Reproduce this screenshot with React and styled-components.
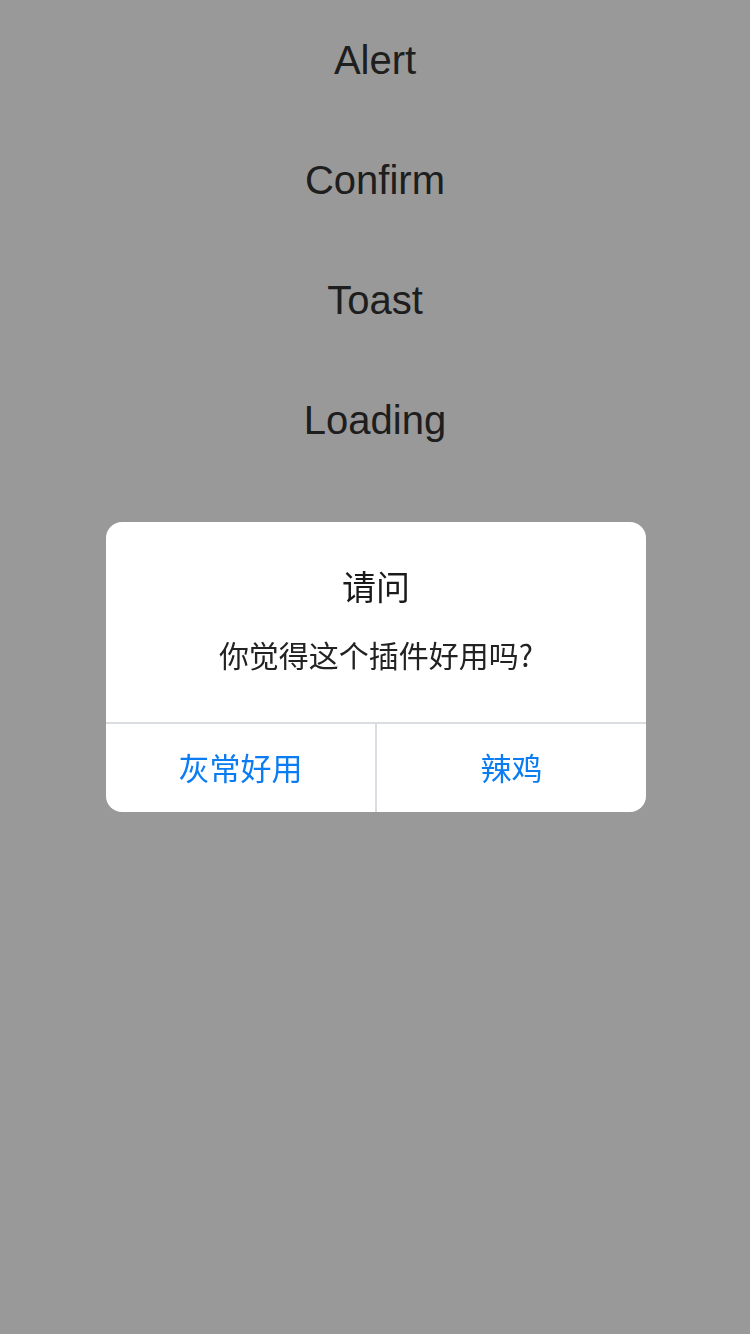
import React from "react";
import styled, { createGlobalStyle } from "styled-components";

const GlobalStyle = createGlobalStyle`
  html, body {
    margin: 0;
    padding: 0;
    background: #ffffff;
    font-family: "Liberation Sans", "Noto Sans CJK SC", Arial, sans-serif;
  }
  * { box-sizing: border-box; }
`;

const Page = styled.div`
  width: 750px;
  min-height: 1334px;
`;

const Menu = styled.ul`
  list-style: none;
  margin: 0;
  padding: 0;
`;

const MenuItem = styled.li`
  height: 120px;
  line-height: 120px;
  text-align: center;
  font-size: 40px;
  color: #333333;
`;

const Mask = styled.div`
  position: fixed;
  inset: 0;
  padding-left: 2px;
  background: rgba(0, 0, 0, 0.4);
  display: flex;
  align-items: center;
  justify-content: center;
`;

const Dialog = styled.div`
  width: 540px;
  background: #ffffff;
  border-radius: 16px;
  overflow: hidden;
  display: flex;
  flex-direction: column;
`;

const Body = styled.div`
  height: 200px;
  padding: 40px 20px 0;
  display: flex;
  flex-direction: column;
  align-items: center;
  gap: 23px;
  font-family: "Noto Sans CJK SC", "Liberation Sans", sans-serif;
  color: #1a1a1a;
`;

const Title = styled.div`
  font-size: 34px;
  line-height: 48px;
`;

const Message = styled.div`
  font-size: 30px;
  line-height: 42px;
  color: #222222;
`;

const Actions = styled.div`
  display: flex;
  height: 90px;
  border-top: 2px solid #d9dce1;
`;

const Action = styled.button`
  flex: 1;
  border: none;
  background: transparent;
  padding: 0 0 4px;
  margin: 0;
  font-family: "Noto Sans CJK SC", "Liberation Sans", sans-serif;
  font-size: 31px;
  color: #0b7cf2;
  border-left: ${(p) => (p.$divider ? "2px solid #d9dce1" : "none")};
  cursor: pointer;
`;

export default function App() {
  return (
    <Page>
      <GlobalStyle />
      <Menu>
        <MenuItem>Alert</MenuItem>
        <MenuItem>Confirm</MenuItem>
        <MenuItem>Toast</MenuItem>
        <MenuItem>Loading</MenuItem>
      </Menu>
      <Mask>
        <Dialog>
          <Body>
            <Title>请问</Title>
            <Message>你觉得这个插件好用吗?</Message>
          </Body>
          <Actions>
            <Action>灰常好用</Action>
            <Action $divider>辣鸡</Action>
          </Actions>
        </Dialog>
      </Mask>
    </Page>
  );
}
